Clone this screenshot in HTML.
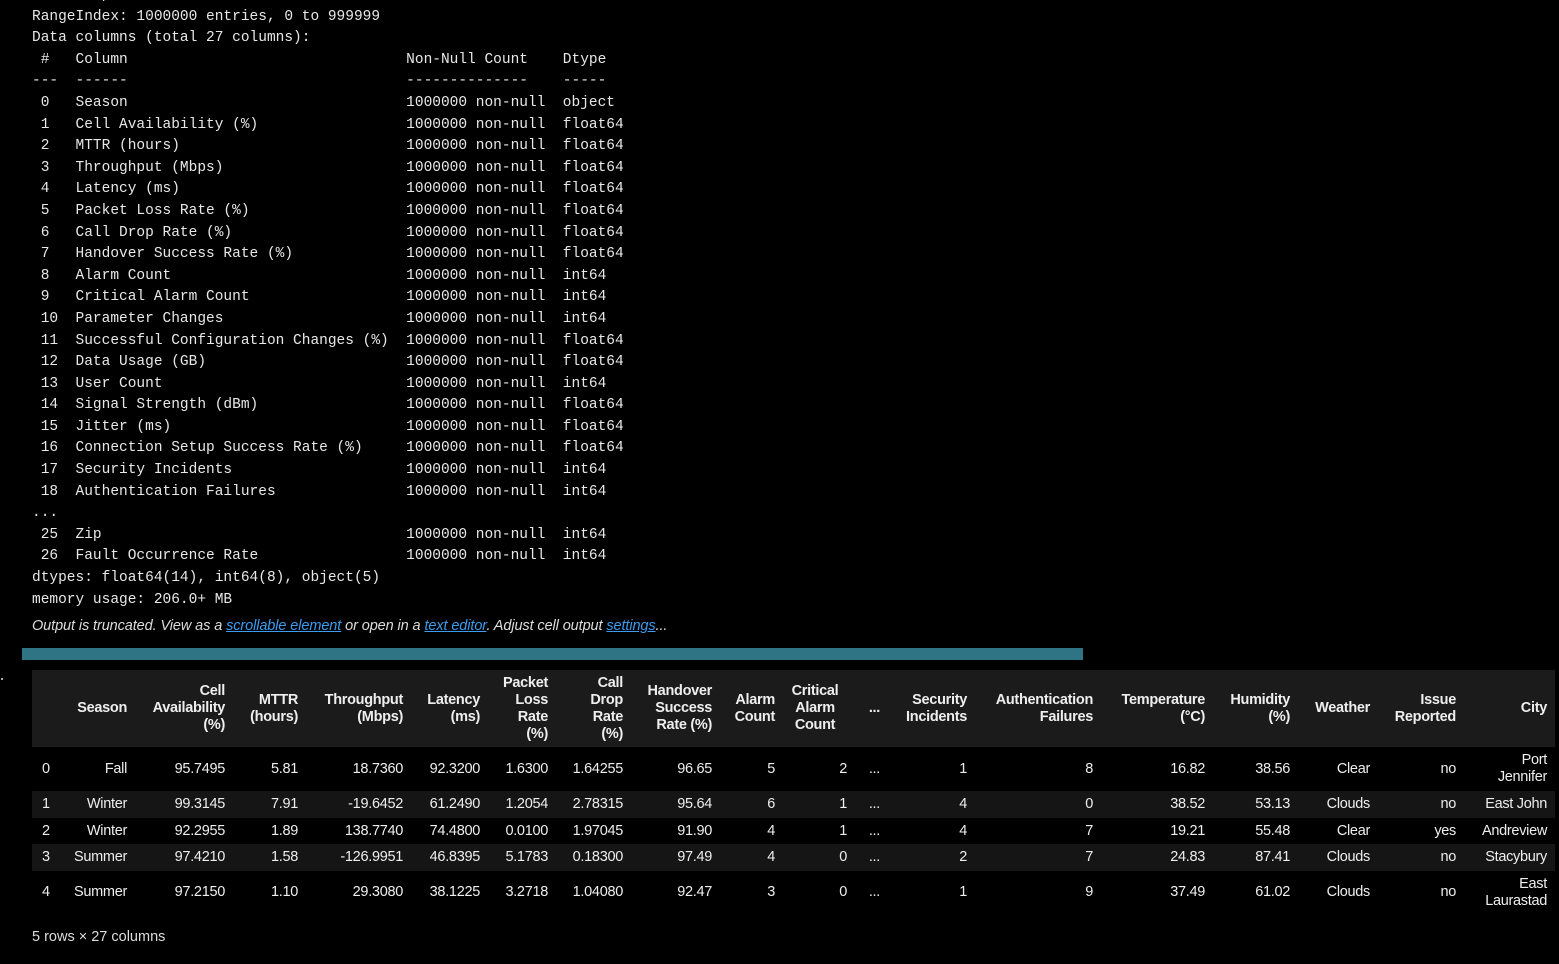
<!DOCTYPE html>
<html><head><meta charset="utf-8"><style>
body{margin:0;background:#000;width:1559px;height:964px;overflow:hidden;position:relative;color:#e6e6e6}
pre{position:absolute;left:32px;top:-15px;margin:0;font-family:"Liberation Mono",monospace;font-size:14.5px;line-height:21.6px;color:#e8e8e8}
.note{position:absolute;left:32px;top:618px;font-family:"Liberation Sans",sans-serif;font-style:italic;font-size:14.5px;color:#ddd;letter-spacing:-0.1px}
.note a{color:#3b9cf0;text-decoration:underline}
.bar{position:absolute;left:22px;top:648px;width:1061px;height:12px;background:#2f7484}
table{position:absolute;left:32px;top:670px;border-collapse:collapse;table-layout:fixed;font-family:"Liberation Sans",sans-serif;font-size:14.5px;color:#eee;letter-spacing:-0.3px}
th,td{text-align:right;padding:0 8px 0 0;line-height:17px;white-space:nowrap}
th{font-weight:bold;background:#1b1b1b;height:77px}
td:first-child,th:first-child{text-align:left;padding-left:10px}
tr.g td{background:#151515}
.foot{position:absolute;left:32px;top:929px;font-family:"Liberation Sans",sans-serif;font-size:14.5px;color:#ddd}
</style></head><body>
<pre>&lt;class 'pandas.core.frame.DataFrame'&gt;
RangeIndex: 1000000 entries, 0 to 999999
Data columns (total 27 columns):
 #   Column                                Non-Null Count    Dtype  
---  ------                                --------------    -----  
 0   Season                                1000000 non-null  object 
 1   Cell Availability (%)                 1000000 non-null  float64
 2   MTTR (hours)                          1000000 non-null  float64
 3   Throughput (Mbps)                     1000000 non-null  float64
 4   Latency (ms)                          1000000 non-null  float64
 5   Packet Loss Rate (%)                  1000000 non-null  float64
 6   Call Drop Rate (%)                    1000000 non-null  float64
 7   Handover Success Rate (%)             1000000 non-null  float64
 8   Alarm Count                           1000000 non-null  int64  
 9   Critical Alarm Count                  1000000 non-null  int64  
 10  Parameter Changes                     1000000 non-null  int64  
 11  Successful Configuration Changes (%)  1000000 non-null  float64
 12  Data Usage (GB)                       1000000 non-null  float64
 13  User Count                            1000000 non-null  int64  
 14  Signal Strength (dBm)                 1000000 non-null  float64
 15  Jitter (ms)                           1000000 non-null  float64
 16  Connection Setup Success Rate (%)     1000000 non-null  float64
 17  Security Incidents                    1000000 non-null  int64  
 18  Authentication Failures               1000000 non-null  int64  
...
 25  Zip                                   1000000 non-null  int64  
 26  Fault Occurrence Rate                 1000000 non-null  int64  
dtypes: float64(14), int64(8), object(5)
memory usage: 206.0+ MB</pre>
<div class="note">Output is truncated. View as a <a>scrollable element</a> or open in a <a>text editor</a>. Adjust cell output <a>settings</a>...</div>
<div class="bar"></div>
<div style="position:absolute;left:1px;top:678px;width:2px;height:2px;background:#aaa"></div>
<table>
<colgroup><col style="width:28px"><col style="width:75px"><col style="width:98px"><col style="width:73px"><col style="width:105px"><col style="width:77px"><col style="width:68px"><col style="width:75px"><col style="width:89px"><col style="width:63px"><col style="width:72px"><col style="width:33px"><col style="width:87px"><col style="width:126px"><col style="width:112px"><col style="width:85px"><col style="width:80px"><col style="width:86px"><col style="width:91px"></colgroup>
<tr><th></th><th>Season</th><th>Cell<br>Availability<br>(%)</th><th>MTTR<br>(hours)</th><th>Throughput<br>(Mbps)</th><th>Latency<br>(ms)</th><th>Packet<br>Loss<br>Rate<br>(%)</th><th>Call<br>Drop<br>Rate<br>(%)</th><th>Handover<br>Success<br>Rate (%)</th><th>Alarm<br>Count</th><th style="text-align:center">Critical<br>Alarm<br>Count</th><th>...</th><th>Security<br>Incidents</th><th>Authentication<br>Failures</th><th>Temperature<br>(°C)</th><th>Humidity<br>(%)</th><th>Weather</th><th>Issue<br>Reported</th><th>City</th></tr>
<tr style="height:44px"><td>0</td><td>Fall</td><td>95.7495</td><td>5.81</td><td>18.7360</td><td>92.3200</td><td>1.6300</td><td>1.64255</td><td>96.65</td><td>5</td><td>2</td><td>...</td><td>1</td><td>8</td><td>16.82</td><td>38.56</td><td>Clear</td><td>no</td><td>Port<br>Jennifer</td></tr>
<tr class="g" style="height:27px"><td>1</td><td>Winter</td><td>99.3145</td><td>7.91</td><td>-19.6452</td><td>61.2490</td><td>1.2054</td><td>2.78315</td><td>95.64</td><td>6</td><td>1</td><td>...</td><td>4</td><td>0</td><td>38.52</td><td>53.13</td><td>Clouds</td><td>no</td><td>East John</td></tr>
<tr style="height:26px"><td>2</td><td>Winter</td><td>92.2955</td><td>1.89</td><td>138.7740</td><td>74.4800</td><td>0.0100</td><td>1.97045</td><td>91.90</td><td>4</td><td>1</td><td>...</td><td>4</td><td>7</td><td>19.21</td><td>55.48</td><td>Clear</td><td>yes</td><td>Andreview</td></tr>
<tr class="g" style="height:27px"><td>3</td><td>Summer</td><td>97.4210</td><td>1.58</td><td>-126.9951</td><td>46.8395</td><td>5.1783</td><td>0.18300</td><td>97.49</td><td>4</td><td>0</td><td>...</td><td>2</td><td>7</td><td>24.83</td><td>87.41</td><td>Clouds</td><td>no</td><td>Stacybury</td></tr>
<tr style="height:43px"><td>4</td><td>Summer</td><td>97.2150</td><td>1.10</td><td>29.3080</td><td>38.1225</td><td>3.2718</td><td>1.04080</td><td>92.47</td><td>3</td><td>0</td><td>...</td><td>1</td><td>9</td><td>37.49</td><td>61.02</td><td>Clouds</td><td>no</td><td>East<br>Laurastad</td></tr>
</table>
<div class="foot">5 rows × 27 columns</div>
</body></html>
